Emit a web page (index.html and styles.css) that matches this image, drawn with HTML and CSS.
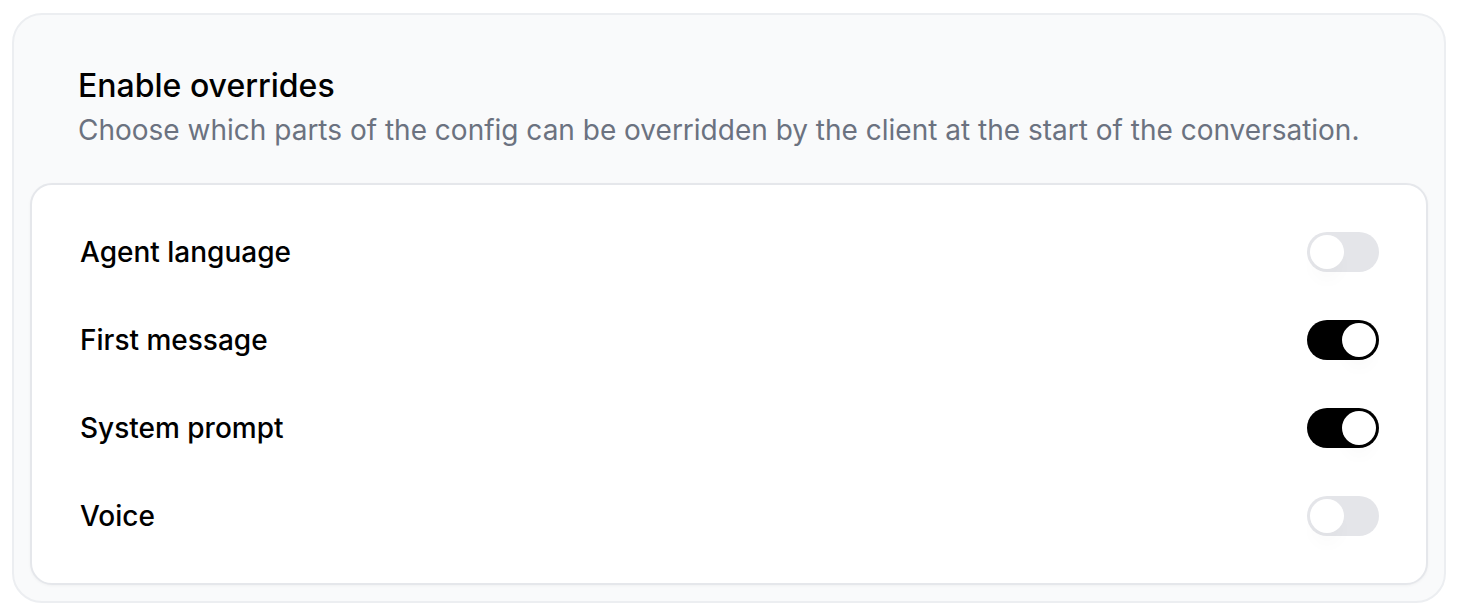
FILE: index.html
```html
<!DOCTYPE html>
<html lang="en">
<head>
<meta charset="utf-8">
<title>Enable overrides</title>
<link rel="stylesheet" href="styles.css">
</head>
<body>
<section class="panel">
  <header class="panel-head">
    <h2 class="panel-title">Enable overrides</h2>
    <p class="panel-desc">Choose which parts of the config can be overridden by the client at the start of the conversation.</p>
  </header>
  <div class="card">
    <div class="row">
      <span class="label">Agent language</span>
      <span class="switch"><span class="knob"></span></span>
    </div>
    <div class="row">
      <span class="label">First message</span>
      <span class="switch on"><span class="knob"></span></span>
    </div>
    <div class="row">
      <span class="label">System prompt</span>
      <span class="switch on"><span class="knob"></span></span>
    </div>
    <div class="row">
      <span class="label">Voice</span>
      <span class="switch"><span class="knob"></span></span>
    </div>
  </div>
</section>
</body>
</html>
```
FILE: styles.css
```css
* { box-sizing: border-box; }
html, body { margin: 0; padding: 0; background: #ffffff; }
body {
  font-family: Inter, "Noto Sans", sans-serif;
  color: #000;
  padding: 13px 12px 0 12px;
}
.panel {
  height: 590px;
  background: #f9fafb;
  border: 2px solid #eceef1;
  border-radius: 30px;
  padding: 0 16px 16px 16px;
  display: flex;
  flex-direction: column;
}
.panel-head {
  padding: 47px 48px 0 48px;
  height: 168px;
}
.panel-title {
  margin: 0;
  font-size: 32px;
  line-height: 48px;
  font-weight: 500;
}
.panel-desc {
  margin: 0;
  font-size: 28px;
  line-height: 40px;
  color: #6b7280;
  font-weight: 400;
}
.card {
  flex: 1;
  background: #ffffff;
  border: 2px solid #e5e7eb;
  border-radius: 22px;
  box-shadow: 0 1px 3px rgba(0,0,0,0.04);
  padding: 23px 47px 22px 48px;
  display: flex;
  flex-direction: column;
}
.row {
  height: 88px;
  display: flex;
  align-items: center;
  justify-content: space-between;
}
.label {
  font-size: 28px;
  font-weight: 500;
}
.switch {
  position: relative;
  width: 72px;
  height: 40px;
  border-radius: 20px;
  background: #e4e5e9;
  padding: 3px;
  display: flex;
  justify-content: flex-start;
}
.switch.on {
  background: #000;
  justify-content: flex-end;
}
.knob {
  width: 34px;
  height: 34px;
  border-radius: 50%;
  background: #fff;
  box-shadow: 0 14px 14px rgba(0,0,0,0.015);
}
```
